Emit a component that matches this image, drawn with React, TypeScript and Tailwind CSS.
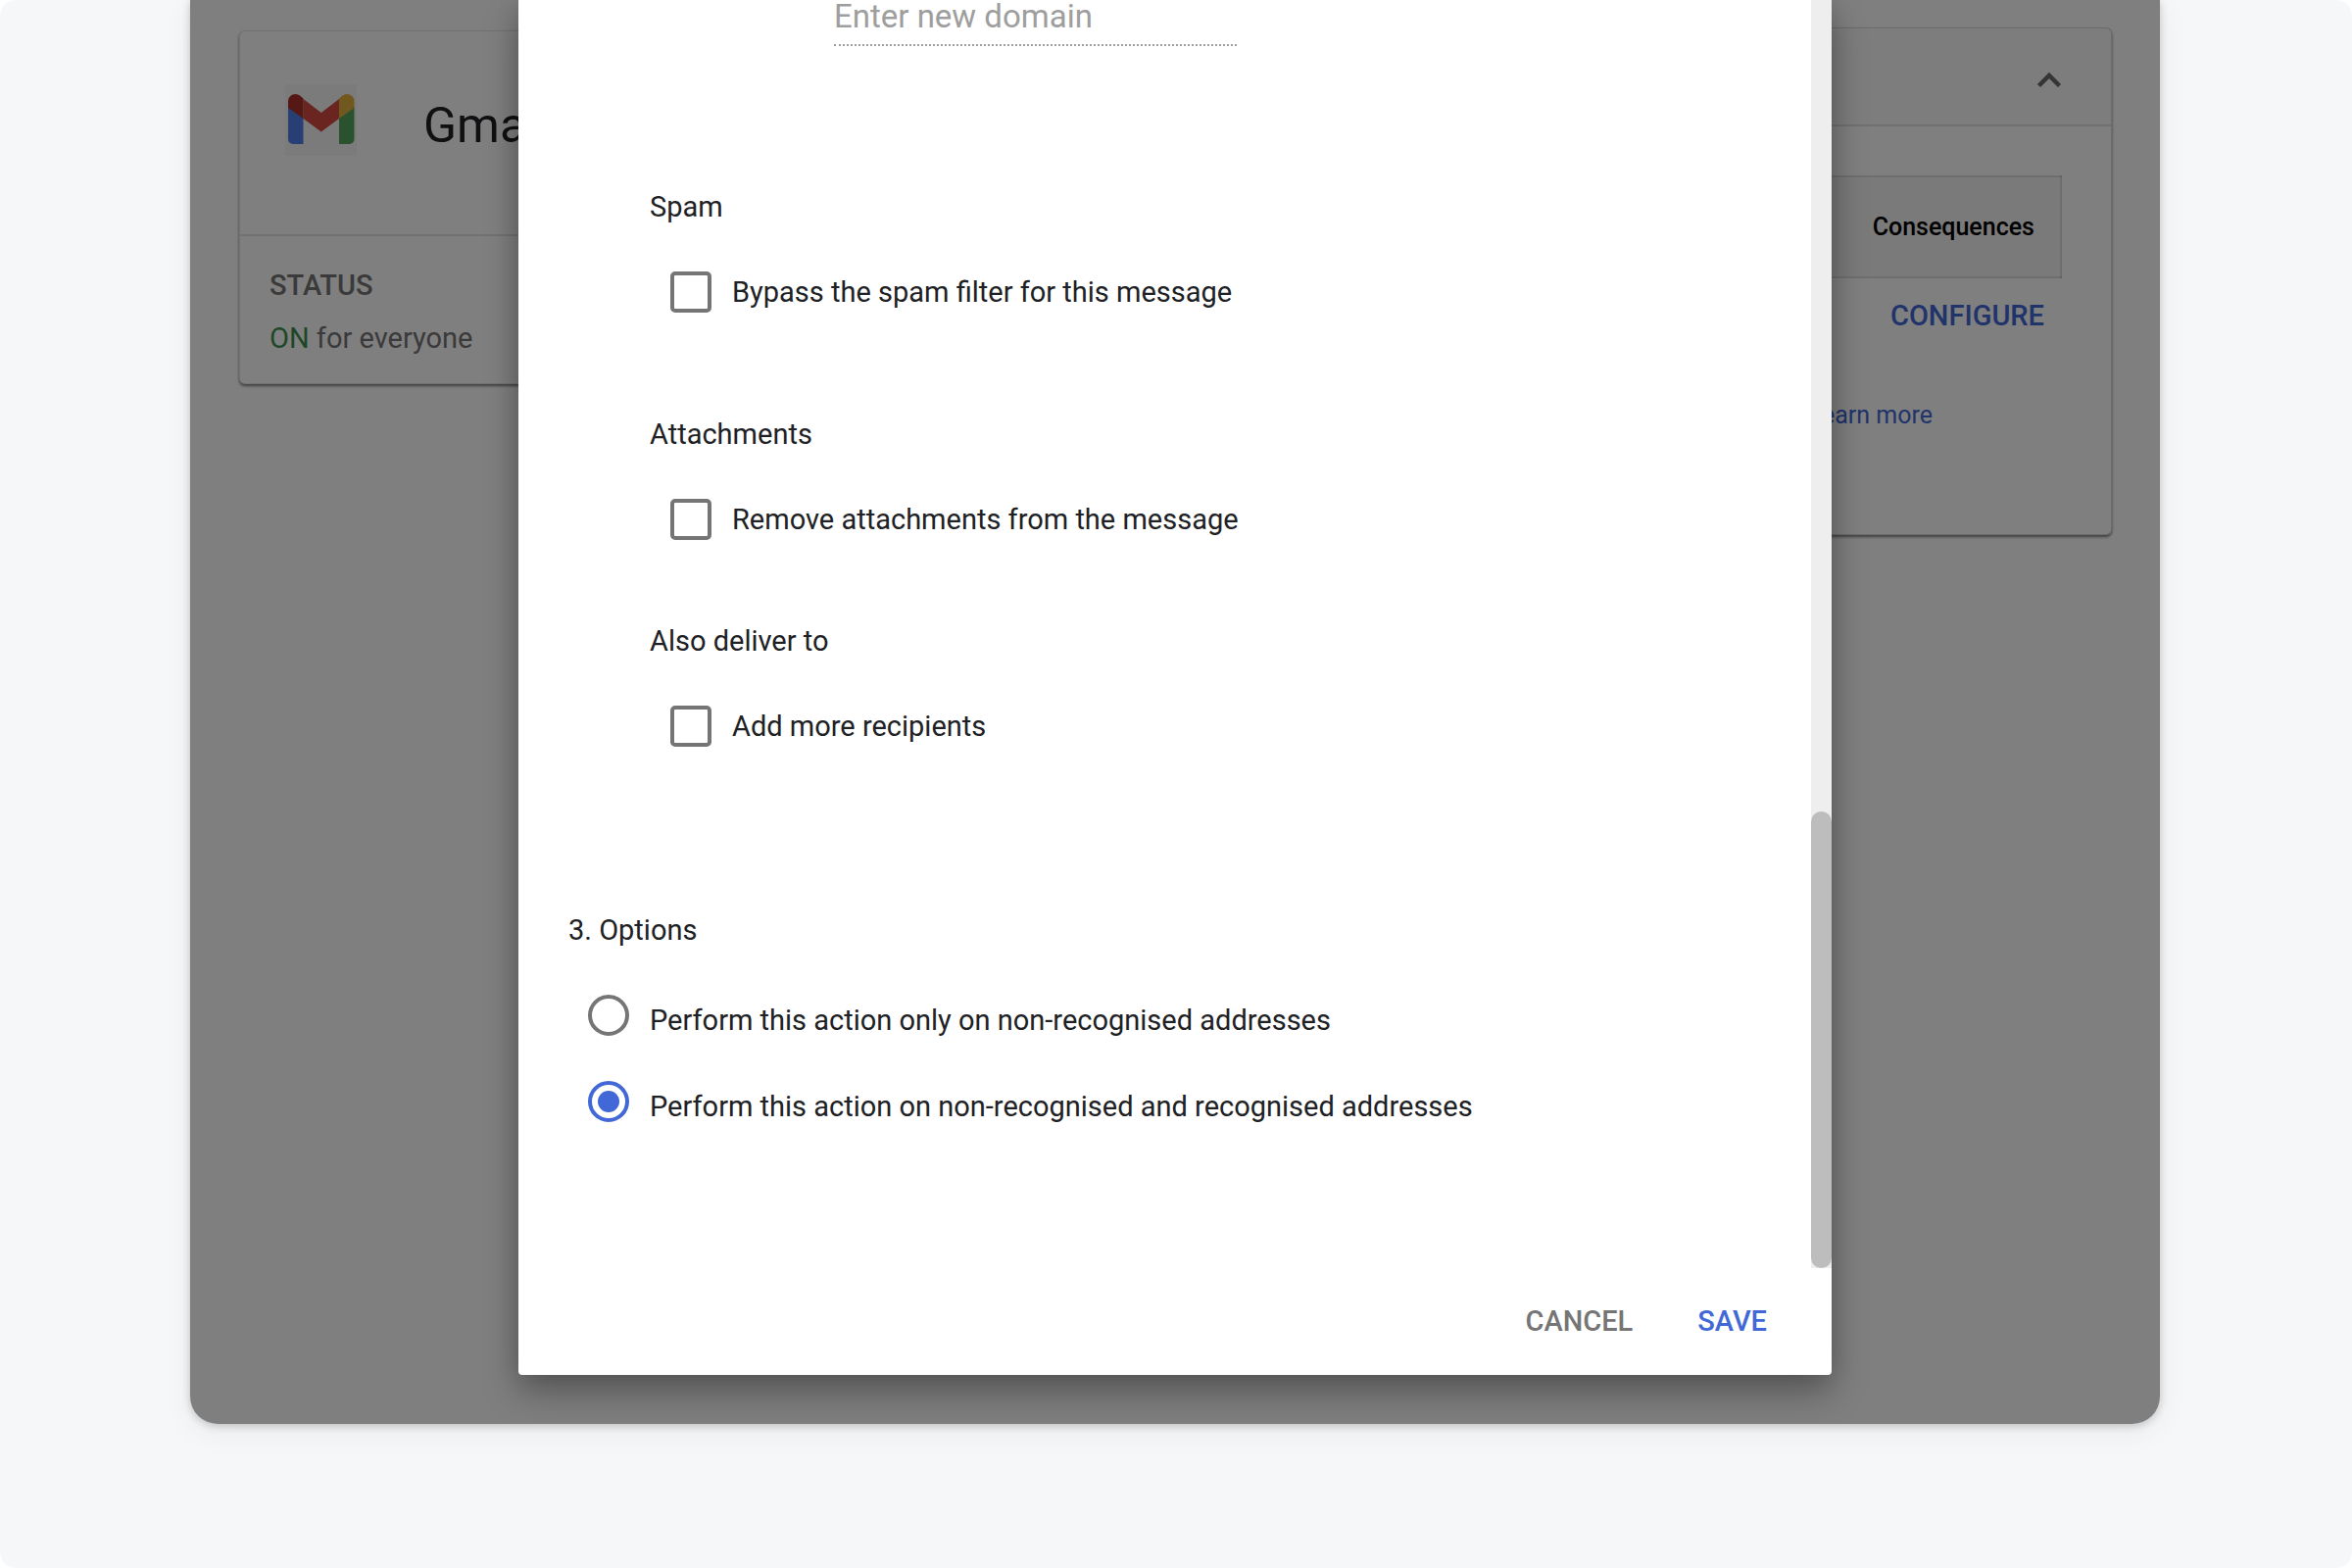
import React, { useState } from "react";

function GmailLogo() {
  return (
    <svg viewBox="0 0 73 73" className="size-[73px] shrink-0 bg-black/[0.035]" aria-hidden="true">
      <path d="M3 23 L18.5 34 V61 H8 a5 5 0 0 1 -5 -5 Z" fill="#4f7ee8" />
      <path d="M70.5 23 L55 34 V61 H65.5 a5 5 0 0 0 5 -5 Z" fill="#55a55c" />
      <path d="M18.5 15 L36.75 29 L55 15 V35 L36.75 48.5 L18.5 35 Z" fill="#d44a42" />
      <path d="M3 24 V17.5 A7.5 7.5 0 0 1 15 11.5 L18.5 14.5 V35 Z" fill="#aa3029" />
      <path d="M70.5 24 V17.5 A7.5 7.5 0 0 0 58.5 11.5 L55 14.5 V35 Z" fill="#e3b03c" />
    </svg>
  );
}

function ServiceCard() {
  return (
    <section className="mt-[31px] w-[480px] shrink-0 rounded-md border border-black/10 bg-white shadow-[0_2px_3px_rgba(0,0,0,0.5)]">
      <header className="flex h-[209px] items-start gap-[68px] border-b-2 border-black/10 pt-[54px] pl-[46px]">
        <GmailLogo />
        <h1 className="pt-3 text-[50px] leading-[60px] text-[#202124]">Gmail</h1>
      </header>
      <div className="flex flex-col gap-2.5 pt-7 pb-6 pl-[30px] text-[29px] leading-11 text-[#757575]">
        <h2 className="font-medium">STATUS</h2>
        <p>
          <span className="text-[#3f8f4f]">ON</span> for everyone
        </p>
      </div>
    </section>
  );
}

function SettingsCard() {
  return (
    <section className="mt-7 flex flex-1 flex-col rounded-md border border-black/15 bg-white pb-[99px] shadow-[0_2px_3px_rgba(0,0,0,0.5)]">
      <header className="flex h-[100px] items-center justify-end border-b-2 border-black/10 bg-black/[0.02] pt-1.5 pr-[49px]">
        <button type="button" aria-label="Collapse" className="flex">
          <svg viewBox="0 0 28 28" className="size-7" aria-hidden="true">
            <path d="M3.5 20.5 L14 10 L24.5 20.5" fill="none" stroke="#6b6b6b" strokeWidth="4.5" />
          </svg>
        </button>
      </header>
      <div className="flex flex-col items-end pt-[50px] pr-[50px]">
        <table className="w-full border-2 border-black/10 bg-black/[0.04]">
          <thead>
            <tr className="h-[103px]">
              <th className="pr-[26px] text-right text-[25px] font-medium text-black">Consequences</th>
            </tr>
          </thead>
        </table>
        <button type="button" className="mt-4 pr-[18px] text-[29px] leading-11 font-medium text-[#4168d6]">
          CONFIGURE
        </button>
        <a href="#learn-more" className="mt-[58px] pr-[132px] text-[25px] leading-11 text-[#4168d6]">
          Learn more
        </a>
      </div>
    </section>
  );
}

type CheckGroupProps = { title: string; label: string; className: string };

function CheckGroup({ title, label, className }: CheckGroupProps) {
  return (
    <fieldset className={className}>
      <legend className="mb-[43px]">{title}</legend>
      <label className="ml-[21px] flex h-11 items-center gap-[21px]">
        <input
          type="checkbox"
          className="size-[42px] shrink-0 appearance-none rounded-[5px] border-4 border-[#757575] bg-white checked:bg-[#4168d6]"
        />
        {label}
      </label>
    </fieldset>
  );
}

type OptionProps = { label: string; checked: boolean; onSelect: () => void };

function Option({ label, checked, onSelect }: OptionProps) {
  return (
    <label className="flex h-12 items-end gap-[21px]">
      <input
        type="radio"
        name="scope"
        checked={checked}
        onChange={onSelect}
        className="grid size-[42px] shrink-0 appearance-none place-items-center self-start rounded-full border-4 border-[#757575] checked:border-[#4168d6] checked:before:size-[22px] checked:before:rounded-full checked:before:bg-[#4168d6]"
      />
      {label}
    </label>
  );
}

const OPTIONS = [
  "Perform this action only on non-recognised addresses",
  "Perform this action on non-recognised and recognised addresses",
];

function RoutingDialog() {
  const [selected, setSelected] = useState(1);
  return (
    <div
      role="dialog"
      aria-label="Routing rule"
      className="z-10 mb-[50px] w-2/3 justify-self-center rounded-b-[4px] bg-white shadow-[0_18px_36px_rgba(0,0,0,0.3),0_0_24px_rgba(0,0,0,0.12)] [grid-area:1/1]"
    >
      <div className="flex">
        <form className="flex-1 pb-[143px] pl-[51px] text-[29px] leading-11 text-[#202124]">
          <input
            type="text"
            aria-label="Domain"
            placeholder="Enter new domain"
            className="ml-[271px] block h-[47px] w-[411px] border-b-2 border-dotted border-[#9e9e9e] pb-3 text-[33px] outline-none placeholder:text-[#9e9e9e]"
          />
          <div className="pl-[83px]">
            <CheckGroup className="mt-[142px]" title="Spam" label="Bypass the spam filter for this message" />
            <CheckGroup className="mt-[101px]" title="Attachments" label="Remove attachments from the message" />
            <CheckGroup className="mt-20" title="Also deliver to" label="Add more recipients" />
          </div>
          <fieldset className="mt-[164px]">
            <legend className="mb-11">3. Options</legend>
            <div className="flex flex-col gap-10 pl-5">
              {OPTIONS.map((label, i) => (
                <Option key={label} label={label} checked={selected === i} onSelect={() => setSelected(i)} />
              ))}
            </div>
          </fieldset>
        </form>
        <div className="flex w-[21px] flex-col justify-end bg-[#eeeeee]" aria-hidden="true">
          <div className="h-[36%] rounded-full bg-[#bdbdbd]" />
        </div>
      </div>
      <footer className="flex h-[109px] items-center justify-end gap-[66px] pr-[66px] text-[29px] font-medium">
        <button type="button" className="text-[#757575]">CANCEL</button>
        <button type="button" className="text-[#4168d6]">SAVE</button>
      </footer>
    </div>
  );
}

export default function App() {
  return (
    <div className="min-h-screen bg-white font-[Roboto,sans-serif]">
      <main className="min-h-screen rounded-[16px] bg-[#f5f7f9] pr-[196px] pl-[194px]">
        <div className="grid overflow-hidden rounded-b-[28px] bg-white shadow-[0_2px_8px_rgba(0,0,0,0.2),0_8px_32px_rgba(0,0,0,0.06)]">
          <div className="flex items-start gap-12 pr-[49px] pl-[50px] [grid-area:1/1]">
            <ServiceCard />
            <SettingsCard />
          </div>
          <div className="z-[1] bg-black/50 [grid-area:1/1]" />
          <RoutingDialog />
        </div>
      </main>
    </div>
  );
}
